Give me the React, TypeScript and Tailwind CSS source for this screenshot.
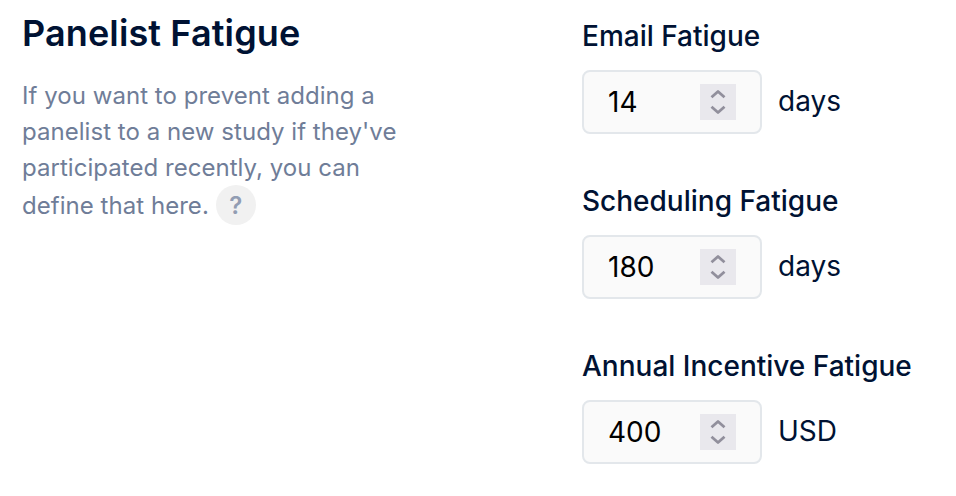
const fields = [
  { label: 'Email Fatigue', value: '14', unit: 'days' },
  { label: 'Scheduling Fatigue', value: '180', unit: 'days' },
  { label: 'Annual Incentive Fatigue', value: '400', unit: 'USD' },
];

function Stepper() {
  return (
    <span className="flex h-9 w-9 items-center justify-center bg-[#e9e8ed]">
      <svg width="36" height="36" viewBox="0 0 36 36" fill="none" stroke="#918f9c" strokeWidth="2.8" strokeLinejoin="round">
        <path d="M11.5 13.2 18 7.5 24.5 13.2" />
        <path d="M11.5 22.8 18 28.5 24.5 22.8" />
      </svg>
    </span>
  );
}

export default function App() {
  return (
    <main className="flex h-[496px] w-[956px] overflow-hidden bg-white font-['Inter',sans-serif] text-[#001233]">
      <section className="w-[560px] pl-[22px] pt-[11px]">
        <h1 className="text-[36px] font-semibold leading-[44px] tracking-[0.12px]">Panelist Fatigue</h1>
        <p className="mt-[23px] text-[24px] leading-[36px] tracking-[0.04px] text-[#6f7d98]">
          If you want to prevent adding a<br />
          panelist to a new study if they've<br />
          participated recently, you can
        </p>
        <div className="-mt-px flex h-10 items-center gap-[7px] text-[24px] tracking-[0.04px] text-[#6f7d98]">
          <span className="pt-px">define that here.</span>
          <span className="flex h-10 w-10 items-center justify-center rounded-full bg-[#f1f1f1] pt-px font-semibold text-[#929db3]">?</span>
        </div>
      </section>
      <section className="flex flex-col gap-[49px] pl-[22px] pt-[18px]">
        {fields.map((f) => (
          <div key={f.label}>
            <h2 className="h-[52px] whitespace-nowrap text-[28px] font-medium leading-[36px]">{f.label}</h2>
            <div className="flex items-center gap-4">
              <div className="flex h-16 w-[180px] items-center justify-between rounded-lg border-2 border-[#e3e7eb] bg-[#fafafa] pl-6 pr-6 text-[28px] text-black">
                <span>{f.value}</span>
                <Stepper />
              </div>
              <span className="pb-[3px] text-[28px]">{f.unit}</span>
            </div>
          </div>
        ))}
      </section>
    </main>
  );
}
